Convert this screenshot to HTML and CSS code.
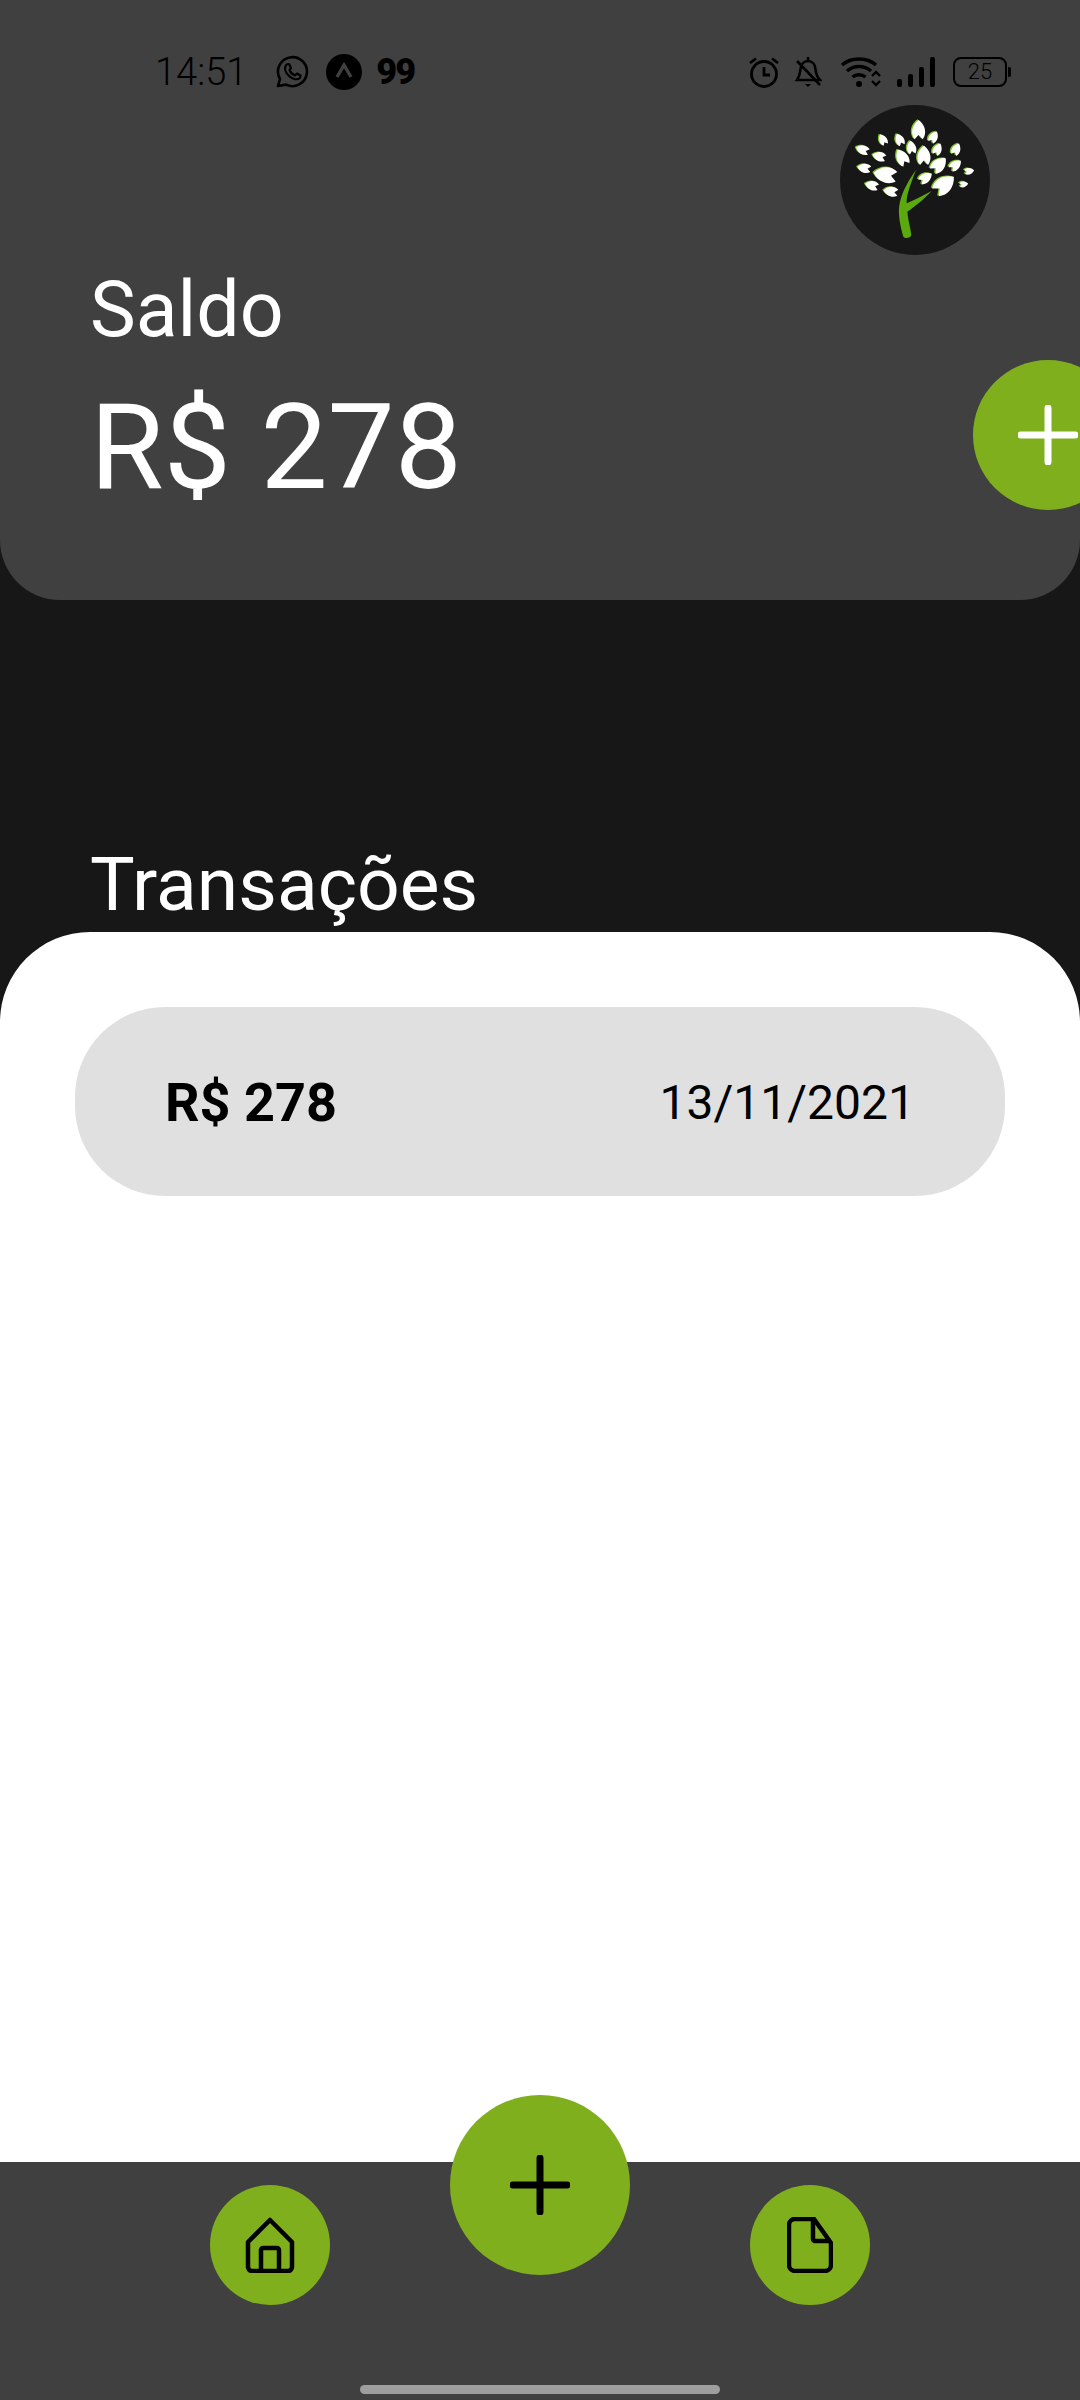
FILE: index.html
```html
<!DOCTYPE html>
<html lang="pt-BR">
<head>
    <meta charset="UTF-8">
    <meta name="viewport" content="width=device-width, initial-scale=1.0">
    <title>Saldo</title>
    <link rel="stylesheet" href="styles.css">
</head>
<body>
    <div class="screen">
        <header class="header">
            <div class="status-bar">
                <div class="status-left">
                    <span class="time">14:51</span>
                    <svg class="ic-whatsapp" viewBox="0 0 34 34">
                        <path d="M3 31 L5 24 A14.5 14.5 0 1 1 11 29.6 Z" fill="none" stroke="#000" stroke-width="2.6" stroke-linejoin="round"/>
                        <path d="M11.5 9.5 L14 9 L16 13 L14.5 15 C15.5 17.5 17.5 19.5 20 20.5 L22 18.5 L25.5 20.5 L25 23 C22 25.5 17 24 13.5 20.5 C10 17 9 12.5 11.5 9.5 Z" fill="none" stroke="#000" stroke-width="2.2" stroke-linejoin="round"/>
                    </svg>
                    <svg class="ic-ant" viewBox="0 0 36 36">
                        <circle cx="18" cy="18" r="18" fill="#000"/>
                        <path d="M11 23 L18 11 L25 23" fill="none" stroke="#404040" stroke-width="3.4"/>
                    </svg>
                    <span class="ninety">99</span>
                </div>
                <div class="status-right">
                    <svg class="ic-alarm" viewBox="0 0 32 32">
                        <circle cx="16" cy="18" r="12.5" fill="none" stroke="#000" stroke-width="2.8"/>
                        <path d="M16 11 V19 H22" fill="none" stroke="#000" stroke-width="2.8"/>
                        <path d="M2 7 L8 2.5 M30 7 L24 2.5" stroke="#000" stroke-width="2.8"/>
                    </svg>
                    <svg class="ic-bell" viewBox="0 0 28 32">
                        <path d="M14 1 V4 M3 24 C6 20 6 17 6.5 13 C7 8 10 5 14 5 C18 5 21 8 21.5 13 C22 17 22 20 26 24 Z" fill="none" stroke="#000" stroke-width="2.6"/>
                        <path d="M11 28 H17 L14 31 Z" fill="#000"/>
                        <path d="M3 5 L26 29" stroke="#000" stroke-width="2.6"/>
                    </svg>
                    <svg class="ic-wifi" viewBox="0 0 42 32">
                        <path d="M2 9 C11 1 27 1 36 9" fill="none" stroke="#000" stroke-width="3.4"/>
                        <path d="M7 15 C14 9 24 9 31 15" fill="none" stroke="#000" stroke-width="3.4"/>
                        <path d="M12.5 21 C16 18 22 18 25.5 21" fill="none" stroke="#000" stroke-width="3.4"/>
                        <circle cx="19" cy="28" r="3" fill="#000"/>
                        <path d="M32 20 L36 16 L40 20 M32 25 L36 29 L40 25" fill="none" stroke="#000" stroke-width="2.4"/>
                    </svg>
                    <div class="signal">
                        <span class="bar bar-1"></span>
                        <span class="bar bar-2"></span>
                        <span class="bar bar-3"></span>
                        <span class="bar bar-4"></span>
                    </div>
                    <div class="battery">
                        <div class="battery-body">25</div>
                        <div class="battery-nub"></div>
                    </div>
                </div>
            </div>

            <div class="avatar-row">
                <svg class="avatar" viewBox="60 30 450 450">
                    <defs>
                        <path id="leaf" d="M0 -33 C20 -18 26 7 12 25 L0 11 L-12 25 C-26 7 -20 -18 0 -33 Z"/>
                        <g id="leaves">
                            <use href="#leaf" transform="translate(296 108)"/>
                            <use href="#leaf" transform="translate(340 128) rotate(30) scale(.65)"/>
                            <use href="#leaf" transform="translate(240 136) rotate(-25) scale(.65)"/>
                            <use href="#leaf" transform="translate(190 136) rotate(-30) scale(.6)"/>
                            <use href="#leaf" transform="translate(275 160) rotate(-10) scale(.7)"/>
                            <use href="#leaf" transform="translate(312 185)"/>
                            <use href="#leaf" transform="translate(352 165) rotate(25) scale(.65)"/>
                            <use href="#leaf" transform="translate(408 165) rotate(25) scale(.65)"/>
                            <use href="#leaf" transform="translate(248 190) rotate(-30) scale(.9)"/>
                            <use href="#leaf" transform="translate(130 165) rotate(-70) scale(.7)"/>
                            <use href="#leaf" transform="translate(180 185) rotate(-75) scale(.7)"/>
                            <use href="#leaf" transform="translate(135 220) rotate(-80) scale(.7)"/>
                            <use href="#leaf" transform="translate(200 240) rotate(-80) scale(1.2)"/>
                            <use href="#leaf" transform="translate(355 212) rotate(45) scale(.95)"/>
                            <use href="#leaf" transform="translate(405 212) rotate(50) scale(.7)"/>
                            <use href="#leaf" transform="translate(446 229) rotate(80) scale(.5)"/>
                            <use href="#leaf" transform="translate(315 250) rotate(55) scale(.75)"/>
                            <use href="#leaf" transform="translate(370 272) rotate(50) scale(1.25)"/>
                            <use href="#leaf" transform="translate(430 268) rotate(80) scale(.45)"/>
                            <use href="#leaf" transform="translate(158 272) rotate(-75) scale(.7)"/>
                            <use href="#leaf" transform="translate(215 290) rotate(-80) scale(.75)"/>
                        </g>
                    </defs>
                    <circle cx="285" cy="255" r="225" fill="#171717"/>
                    <path d="M250 425 C240 390 232 350 240 320 C248 285 270 250 288 224 C275 260 258 300 260 325 C285 315 310 300 335 288 C315 310 285 335 262 350 C265 380 272 400 274 420 C272 430 255 432 250 425 Z" fill="#5ba80f"/>
                    <use href="#leaves" fill="#7cc22a" transform="translate(-4 -2)"/>
                    <use href="#leaves" fill="#fff"/>
                </svg>
            </div>

            <div class="balance-label">Saldo</div>
            <div class="balance-value">R$ 278</div>

            <button class="fab-side">
                <svg viewBox="0 0 60 60"><path d="M30 3 V57 M3 30 H57" stroke="#fff" stroke-width="7" stroke-linecap="round"/></svg>
            </button>
        </header>

        <h2 class="section-title">Transações</h2>

        <main class="sheet">
            <div class="tx-card">
                <span class="tx-value">R$ 278</span>
                <span class="tx-date">13/11/2021</span>
            </div>
        </main>

        <nav class="bottom-nav">
            <div class="nav-row">
                <button class="nav-btn">
                    <svg class="ic-home" viewBox="0 0 50 56">
                        <path d="M25 3 L47 25 V50 A4 4 0 0 1 43 54 H7 A4 4 0 0 1 3 50 V25 Z" fill="none" stroke="#000" stroke-width="4.5" stroke-linejoin="round"/>
                        <path d="M16 54 V33 A2 2 0 0 1 18 31 H32 A2 2 0 0 1 34 33 V54" fill="none" stroke="#000" stroke-width="4.5"/>
                    </svg>
                </button>
                <button class="nav-add">
                    <svg viewBox="0 0 60 60"><path d="M30 3 V57 M3 30 H57" stroke="#000" stroke-width="7" stroke-linecap="round"/></svg>
                </button>
                <button class="nav-btn">
                    <svg class="ic-file" viewBox="0 0 46 56">
                        <path d="M8 2 H27 L44 26 V48 A6 6 0 0 1 38 54 H8 A6 6 0 0 1 2 48 V8 A6 6 0 0 1 8 2 Z" fill="none" stroke="#000" stroke-width="4.5" stroke-linejoin="round"/>
                        <path d="M26 2 V22 A2 2 0 0 0 28 24 H44" fill="none" stroke="#000" stroke-width="4.5"/>
                    </svg>
                </button>
            </div>
            <div class="home-indicator"></div>
        </nav>
    </div>
</body>
</html>
```
FILE: styles.css
```css
* {
    box-sizing: border-box;
}

body {
    margin: 0;
    font-family: Roboto, "Liberation Sans", sans-serif;
    background-color: #171717;
}

button {
    padding: 0;
    border: none;
    cursor: pointer;
}

.screen {
    display: flex;
    flex-direction: column;
    width: 1080px;
    height: 2400px;
    overflow: hidden;
}

.header {
    position: relative;
    flex: none;
    height: 600px;
    padding: 52px 0 0 90px;
    background-color: #404040;
    border-radius: 0 0 60px 60px;
    color: white;
}

.status-bar {
    display: flex;
    justify-content: space-between;
    align-items: center;
    height: 40px;
    padding: 0 69px 0 65px;
    color: #000;
}

.status-left,
.status-right {
    display: flex;
    align-items: center;
}

.time {
    font-size: 38px;
    font-weight: 300;
    line-height: 40px;
    margin-right: 28px;
}

.ic-whatsapp {
    width: 34px;
    height: 34px;
    margin-right: 17px;
}

.ic-ant {
    width: 36px;
    height: 36px;
    margin-right: 14px;
}

.ninety {
    font-size: 36px;
    font-weight: 900;
    line-height: 40px;
    letter-spacing: -2px;
}

.ic-alarm {
    width: 32px;
    height: 32px;
    margin-right: 14px;
}

.ic-bell {
    width: 28px;
    height: 32px;
    margin-right: 18px;
}

.ic-wifi {
    width: 42px;
    height: 32px;
    margin-right: 15px;
}

.signal {
    display: flex;
    align-items: flex-end;
    gap: 6px;
    height: 30px;
    margin-right: 18px;
}

.bar {
    width: 5px;
    background-color: #000;
    border-radius: 2px;
}

.bar-1 { height: 8px; }
.bar-2 { height: 13px; }
.bar-3 { height: 20px; }
.bar-4 { height: 30px; }

.battery {
    display: flex;
    align-items: center;
}

.battery-body {
    width: 54px;
    height: 30px;
    border: 2.5px solid #000;
    border-radius: 8px;
    font-size: 22px;
    font-weight: 300;
    line-height: 25px;
    text-align: center;
}

.battery-nub {
    width: 3px;
    height: 10px;
    margin-left: 1px;
    background-color: #000;
    border-radius: 0 2px 2px 0;
}

.avatar-row {
    display: flex;
    justify-content: flex-end;
    padding-top: 13px;
    padding-right: 90px;
}

.avatar {
    display: block;
    width: 150px;
    height: 150px;
}

.balance-label {
    margin-top: 13px;
    font-size: 77px;
    line-height: 84px;
}

.balance-value {
    margin-top: 25px;
    font-size: 119.5px;
    line-height: 140px;
}

.fab-side {
    position: absolute;
    top: 360px;
    right: -43px;
    display: flex;
    justify-content: center;
    align-items: center;
    width: 150px;
    height: 150px;
    border-radius: 50%;
    background-color: #80af1e;
}

.fab-side svg {
    width: 60px;
    height: 60px;
}

.section-title {
    flex: none;
    margin: 242px 0 6px;
    padding-left: 90px;
    font-size: 75px;
    font-weight: 400;
    line-height: 84px;
    color: white;
}

.sheet {
    flex: 1;
    padding: 75px 75px 0;
    background-color: white;
    border-radius: 90px 90px 0 0;
}

.tx-card {
    display: flex;
    justify-content: space-between;
    align-items: center;
    height: 189px;
    padding: 2px 90px 0 90px;
    background-color: #e0e0e0;
    border-radius: 90px;
    color: #000;
}

.tx-value {
    font-size: 54px;
    font-weight: 700;
}

.tx-date {
    font-size: 48px;
}

.bottom-nav {
    flex: none;
    height: 238px;
    background-color: #404040;
}

.nav-row {
    display: flex;
    justify-content: center;
    align-items: flex-start;
    gap: 120px;
    height: 143px;
}

.nav-btn {
    display: flex;
    justify-content: center;
    align-items: center;
    width: 120px;
    height: 120px;
    margin-top: 23px;
    border-radius: 50%;
    background-color: #80af1e;
}

.nav-add {
    display: flex;
    justify-content: center;
    align-items: center;
    width: 180px;
    height: 180px;
    margin-top: -67px;
    border-radius: 50%;
    background-color: #80af1e;
}

.nav-add svg {
    width: 60px;
    height: 60px;
}

.ic-home {
    width: 50px;
    height: 56px;
}

.ic-file {
    width: 46px;
    height: 56px;
}

.home-indicator {
    width: 360px;
    height: 9px;
    margin: 80px auto 0;
    background-color: #9e9e9e;
    border-radius: 5px;
}
```
